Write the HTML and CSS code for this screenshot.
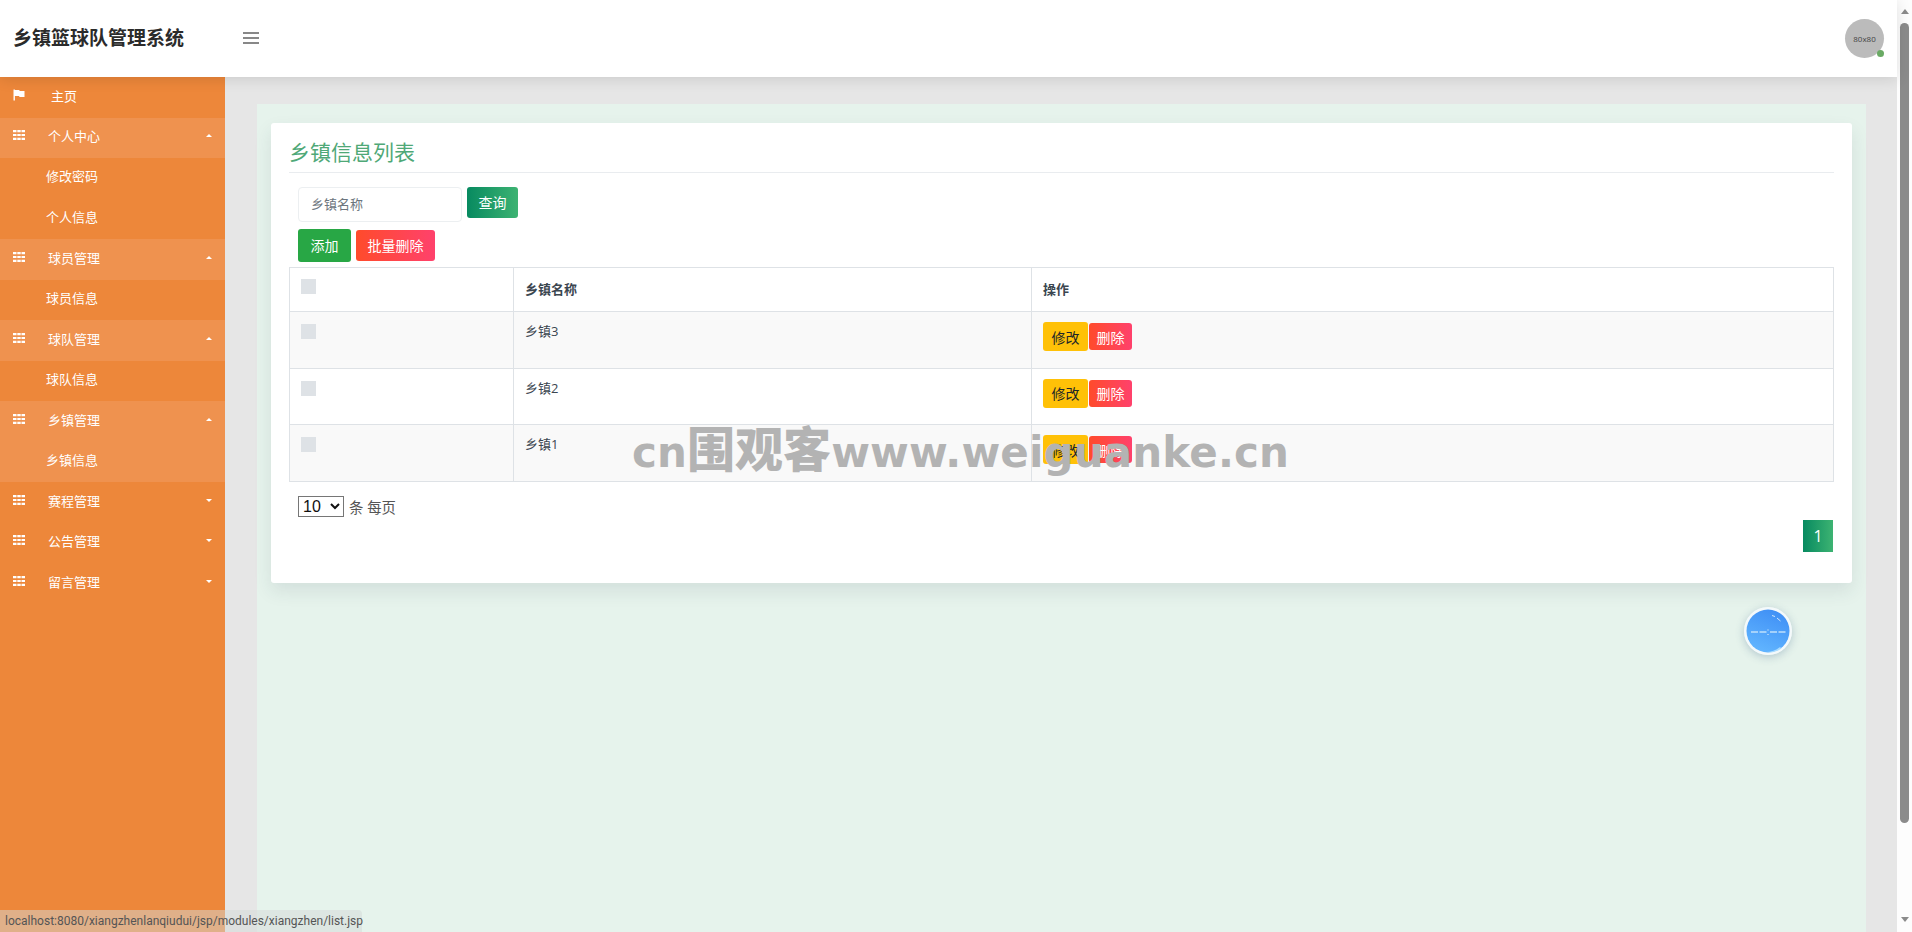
FILE: index.html
```html
<!DOCTYPE html>
<html lang="zh-CN">
<head>
    <meta charset="UTF-8">
    <title>乡镇篮球队管理系统</title>
    <link rel="stylesheet" href="styles.css">
</head>
<body>
    <div class="page">
        <header class="topbar">
            <div class="brand">乡镇篮球队管理系统</div>
            <div class="hamburger"><span></span><span></span><span></span></div>
            <div class="avatar">80x80<span class="online"></span></div>
        </header>

        <div class="layout">
            <nav class="sidebar">
                <a class="nav-home">
                    <svg class="nav-icon" viewBox="0 0 12 12"><path fill="#fff" d="M0.5 0.5h1.4v11H0.5zM1.9 1h4.3l0.5 1h4.8v6H6.6L6 7H1.9z"/></svg>
                    <span>主页</span>
                </a>
                <a class="nav-group open"><svg class="nav-icon" viewBox="0 0 12 12"><use href="#grid"/></svg><span>个人中心</span><i class="caret up"></i></a>
                <a class="nav-sub">修改密码</a>
                <a class="nav-sub">个人信息</a>
                <a class="nav-group open"><svg class="nav-icon" viewBox="0 0 12 12"><use href="#grid"/></svg><span>球员管理</span><i class="caret up"></i></a>
                <a class="nav-sub">球员信息</a>
                <a class="nav-group open"><svg class="nav-icon" viewBox="0 0 12 12"><use href="#grid"/></svg><span>球队管理</span><i class="caret up"></i></a>
                <a class="nav-sub">球队信息</a>
                <a class="nav-group open"><svg class="nav-icon" viewBox="0 0 12 12"><use href="#grid"/></svg><span>乡镇管理</span><i class="caret up"></i></a>
                <a class="nav-sub active">乡镇信息</a>
                <a class="nav-group"><svg class="nav-icon" viewBox="0 0 12 12"><use href="#grid"/></svg><span>赛程管理</span><i class="caret"></i></a>
                <a class="nav-group"><svg class="nav-icon" viewBox="0 0 12 12"><use href="#grid"/></svg><span>公告管理</span><i class="caret"></i></a>
                <a class="nav-group"><svg class="nav-icon" viewBox="0 0 12 12"><use href="#grid"/></svg><span>留言管理</span><i class="caret"></i></a>
            </nav>

            <main class="main">
                <div class="content">
                    <section class="card">
                        <h2 class="card-title">乡镇信息列表</h2>
                        <div class="search-row">
                            <input class="search-input" type="text" placeholder="乡镇名称">
                            <button class="btn btn-query">查询</button>
                        </div>
                        <div class="action-row">
                            <button class="btn btn-add">添加</button>
                            <button class="btn btn-danger btn-batch">批量删除</button>
                        </div>
                        <table class="data-table">
                            <thead>
                                <tr>
                                    <th class="col-check"><span class="check"></span></th>
                                    <th class="col-name">乡镇名称</th>
                                    <th>操作</th>
                                </tr>
                            </thead>
                            <tbody>
                                <tr>
                                    <td><span class="check"></span></td>
                                    <td class="name">乡镇3</td>
                                    <td class="ops"><button class="btn btn-edit">修改</button><button class="btn btn-danger btn-del">删除</button></td>
                                </tr>
                                <tr>
                                    <td><span class="check"></span></td>
                                    <td class="name">乡镇2</td>
                                    <td class="ops"><button class="btn btn-edit">修改</button><button class="btn btn-danger btn-del">删除</button></td>
                                </tr>
                                <tr>
                                    <td><span class="check"></span></td>
                                    <td class="name">乡镇1</td>
                                    <td class="ops"><button class="btn btn-edit">修改</button><button class="btn btn-danger btn-del">删除</button></td>
                                </tr>
                            </tbody>
                        </table>
                        <div class="page-size">
                            <select class="size-select"><option>10</option></select>
                            <span>条 每页</span>
                        </div>
                        <div class="pager"><a class="page-num">1</a></div>
                    </section>
                </div>
            </main>
        </div>
    </div>

    <div class="scrollbar">
        <i class="arrow-up"></i>
        <div class="thumb"></div>
        <i class="arrow-down"></i>
    </div>

    <div class="float-ball">
        <svg viewBox="0 0 48 48" width="48" height="48">
            <defs>
                <linearGradient id="ballFill" x1="0.7" y1="0" x2="0.3" y2="1">
                    <stop offset="0" stop-color="#3f8ff5"/>
                    <stop offset="1" stop-color="#62b6ff"/>
                </linearGradient>
            </defs>
            <circle cx="24" cy="24" r="24" fill="#f4f9fb"/>
            <circle cx="24" cy="24" r="21.5" fill="url(#ballFill)"/>
            <path d="M7 25h7M15.500 25h7M26 25h7M34.500 25h7" stroke="#bfe0fb" stroke-width="1.6" fill="none"/>
            <path d="M24 22.500v1M24 27v1" stroke="#bfe0fb" stroke-width="1.400" fill="none"/>
            <path d="M28 8.500l3 1M33 11l3.500 3" stroke="#cfe6fb" stroke-width="1" fill="none"/>
            <path d="M22 45c5 0 10-1.500 14-5l1.500 1.500C33 44.500 28 46 22 45z" fill="#a9dcff"/>
        </svg>
    </div>

    <div class="watermark">cn<span class="watermark-cn">围观客</span>www.weiguanke.cn</div>
    <div class="status-url">localhost:8080/xiangzhenlanqiudui/jsp/modules/xiangzhen/list.jsp</div>

    <svg class="defs" width="0" height="0">
        <symbol id="grid" viewBox="0 0 12 12">
            <path fill="#fff" d="M0 1h3.500v2.200H0zM4.300 1h3.400v2.200H4.300zM8.500 1H12v2.200H8.500zM0 4.900h3.500v2.200H0zM4.300 4.900h3.400v2.200H4.300zM8.500 4.900H12v2.200H8.500zM0 8.800h3.500V11H0zM4.300 8.800h3.400V11H4.300zM8.500 8.800H12V11H8.500z"/>
        </symbol>
    </svg>
</body>
</html>
```

FILE: styles.css
```css
:root {
    --orange: #ed873a;
    --orange-light: #ef924f;
    --green-title: #4fa877;
    --line: #dee2e6;
    --text: #3b4650;
}

* {
    box-sizing: border-box;
    margin: 0;
    padding: 0;
}

html, body {
    height: 932px;
    overflow: hidden;
}

body {
    display: flex;
    font-family: "Open Sans", "Noto Sans CJK SC", sans-serif;
    font-size: 13px;
    color: var(--text);
    background: #e6e6e6;
}

.page {
    flex: 1;
    display: flex;
    flex-direction: column;
    min-width: 0;
}

.topbar {
    height: 77px;
    flex: none;
    display: flex;
    align-items: center;
    background: #fff;
    box-shadow: 0 2px 14px rgba(0, 0, 0, 0.12);
    position: relative;
    z-index: 2;
}

.brand {
    width: 243px;
    padding-left: 13px;
    padding-bottom: 3px;
    font-size: 19px;
    font-weight: 700;
    color: #2b2b2b;
}

.hamburger {
    width: 16px;
    display: flex;
    flex-direction: column;
    gap: 3px;
    margin-top: -1px;
}

.hamburger span {
    height: 2px;
    background: #888;
}

.avatar {
    position: relative;
    width: 39px;
    height: 39px;
    margin-left: auto;
    margin-right: 13px;
    border-radius: 50%;
    background: #bbb;
    color: #444;
    font-size: 8px;
    line-height: 39px;
    text-align: center;
}

.online {
    position: absolute;
    right: 0;
    bottom: 1px;
    width: 7px;
    height: 7px;
    border-radius: 50%;
    background: #6aaa64;
}

.layout {
    flex: 1;
    display: flex;
    min-height: 0;
}

.sidebar {
    width: 225px;
    flex: none;
    background: var(--orange);
    color: #fff;
}

.sidebar a {
    display: flex;
    align-items: center;
    height: 40.500px;
    padding-bottom: 4px;
    white-space: nowrap;
}

.nav-icon {
    width: 12px;
    height: 12px;
    margin-left: 13px;
    margin-top: -1px;
    flex: none;
}

.nav-home span {
    margin-left: 26px;
}

.nav-group span {
    margin-left: 23px;
}

.nav-group.open,
.nav-sub.active {
    background: var(--orange-light);
}

.sidebar .nav-sub {
    padding-left: 46px;
    padding-bottom: 5px;
}

.caret {
    margin-left: auto;
    margin-right: 13px;
    width: 0;
    height: 0;
    border-left: 3px solid transparent;
    border-right: 3px solid transparent;
    border-top: 3px solid #fff;
}

.caret.up {
    border-top: 0;
    border-bottom: 3px solid #fff;
}

.main {
    flex: 1;
    min-width: 0;
    padding: 27px 31px 0 32px;
    background: #e6e6e6;
}

.content {
    height: 100%;
    padding: 19px 14px;
    background: #e6f3ec;
}

.card {
    height: 460px;
    padding: 14px 18px 0;
    background: #fff;
    border-radius: 3px;
    box-shadow: 0 8px 18px rgba(40, 60, 80, 0.1);
}

.card-title {
    height: 36px;
    font-size: 21px;
    font-weight: 400;
    line-height: 30px;
    color: var(--green-title);
    border-bottom: 1px solid #e9ecef;
}

.search-row {
    display: flex;
    align-items: flex-start;
    gap: 5px;
    margin-top: 14px;
    padding-left: 9px;
}

.search-input {
    width: 164px;
    height: 35px;
    padding: 0 12px 2px;
    border: 1px solid #eceff1;
    border-radius: 4px;
    font: inherit;
    outline: none;
}

.search-input::placeholder {
    color: #6c757d;
}

.btn {
    padding-bottom: 2px;
    border: none;
    border-radius: 3px;
    font-family: inherit;
    font-size: 14px;
    color: #fff;
}

.btn-query {
    width: 51px;
    height: 31px;
    background: linear-gradient(to right, #078a60, #3db372);
}

.action-row {
    display: flex;
    align-items: center;
    gap: 5px;
    margin-top: 7px;
    padding-left: 9px;
}

.btn-add {
    width: 53px;
    height: 33px;
    background: #28a745;
}

.btn-danger {
    background: linear-gradient(to right, #ff4b2b, #ff416c);
}

.btn-batch {
    width: 79px;
    height: 31px;
}

.data-table {
    width: 1545px;
    height: 214px;
    margin-top: 5px;
    border-collapse: collapse;
    table-layout: fixed;
}

.data-table th,
.data-table td {
    padding: 11px 11px 0;
    border: 1px solid var(--line);
    text-align: left;
    vertical-align: top;
    line-height: 20px;
}

.data-table td {
    padding-top: 12px;
}

.data-table thead tr {
    height: 44px;
}

.data-table th {
    font-weight: 700;
}

.data-table tbody tr {
    height: 56.500px;
}

.data-table tbody tr:nth-child(odd) {
    background: #f9f9f9;
}

.col-check {
    width: 224px;
}

.col-name {
    width: 518px;
}

.check {
    display: block;
    width: 15px;
    height: 15px;
    background: var(--line);
}

.data-table .name {
    padding-top: 9px;
}

.data-table .ops {
    padding-top: 10px;
    white-space: nowrap;
}

.btn-edit {
    width: 45px;
    height: 29px;
    margin-right: 1px;
    padding-bottom: 0;
    background: #ffc107;
    color: #212529;
    vertical-align: middle;
}

.btn-del {
    width: 43px;
    height: 27px;
    padding-bottom: 0;
    vertical-align: middle;
}

.page-size {
    display: flex;
    align-items: center;
    gap: 5px;
    margin-top: 14px;
    padding-left: 9px;
    font-size: 14.400px;
    color: #555;
}

.size-select {
    width: 46px;
    height: 21px;
    font-family: "Liberation Sans", sans-serif;
    font-size: 16px;
    color: #111;
    background: #fff;
}

.pager {
    display: flex;
    justify-content: flex-end;
    margin-top: 3px;
    padding-right: 1px;
}

.page-num {
    width: 30px;
    height: 32px;
    background: linear-gradient(to right, #078a60, #3db372);
    color: #fff;
    font-size: 16px;
    line-height: 32px;
    text-align: center;
}

.scrollbar {
    width: 15px;
    flex: none;
    display: flex;
    flex-direction: column;
    align-items: center;
    background: #fdfdfd;
}

.thumb {
    width: 9px;
    height: 800px;
    margin-top: 9px;
    border-radius: 5px;
    background: #8b8b8b;
}

.arrow-up,
.arrow-down {
    width: 0;
    height: 0;
    border-left: 4.500px solid transparent;
    border-right: 4.500px solid transparent;
}

.arrow-up {
    margin-top: 9px;
    border-bottom: 5px solid #8b8b8b;
}

.arrow-down {
    margin-top: 94px;
    border-top: 5px solid #8b8b8b;
}

.float-ball {
    position: absolute;
    left: 1744px;
    top: 607px;
    width: 48px;
    height: 48px;
    border-radius: 50%;
    box-shadow: 0 2px 8px rgba(60, 100, 140, 0.3);
}

.float-ball svg {
    display: block;
}

.watermark {
    position: absolute;
    left: 632px;
    top: 418px;
    font-family: "DejaVu Sans", "Noto Sans CJK SC", sans-serif;
    font-size: 42px;
    font-weight: 700;
    line-height: 56px;
    letter-spacing: 0.150px;
    color: #b3b3b3;
    white-space: nowrap;
}

.watermark-cn {
    font-family: "Noto Sans CJK SC", sans-serif;
    font-size: 48px;
    font-weight: 900;
    letter-spacing: 0;
}

.status-url {
    position: absolute;
    left: 0;
    bottom: 0;
    width: 362px;
    height: 22px;
    padding-left: 5px;
    border-top-right-radius: 4px;
    background: rgba(211, 217, 216, 0.5);
    color: #555;
    font-family: "Roboto", sans-serif;
    font-size: 12px;
    line-height: 23px;
    white-space: nowrap;
}

.defs {
    position: absolute;
}
```
